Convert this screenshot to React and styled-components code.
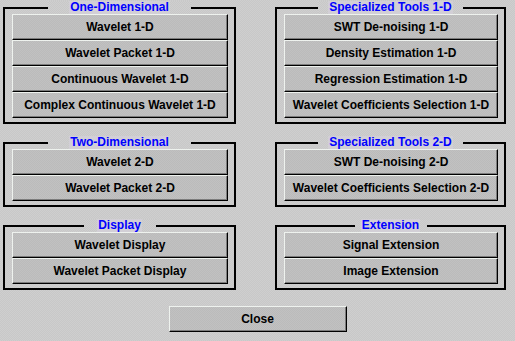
import React from 'react';
import styled, { createGlobalStyle } from 'styled-components';

const GlobalStyle = createGlobalStyle`
  html, body {
    margin: 0;
    padding: 0;
  }
  body {
    width: 515px;
    height: 341px;
    overflow: hidden;
    background: repeating-conic-gradient(#c8c8c8 0 25%, #cfcfcf 0 50%) 0 0 / 2px 2px;
    font-family: "Liberation Sans", Arial, sans-serif;
  }
`;

const Window = styled.div`
  width: 515px;
  height: 341px;
  box-sizing: border-box;
  padding-top: 7px;
  display: flex;
  flex-direction: column;
`;

const Grid = styled.div`
  display: grid;
  grid-template-columns: 233px 231px;
  column-gap: 39px;
  row-gap: 18px;
  margin-left: 3px;
`;

const Frame = styled.div`
  position: relative;
  border: 2px solid #000;
  padding: 5px 6px 4px 7px;
  display: flex;
  flex-direction: column;
`;

const Label = styled.div`
  position: absolute;
  top: -8px;
  left: 50%;
  width: ${(p) => p.$w}px;
  margin-left: ${(p) => -p.$w / 2}px;
  height: 13px;
  display: flex;
  justify-content: center;
  background: repeating-conic-gradient(#c8c8c8 0 25%, #cfcfcf 0 50%) 0 0 / 2px 2px;
`;

const LabelText = styled.span`
  color: #0000ff;
  font-weight: bold;
  font-size: 12px;
  line-height: 13px;
  background: #d2cfd6;
  padding: 0 1px;
`;

const Button = styled.button`
  box-sizing: border-box;
  height: 26px;
  width: ${(p) => (p.$w ? `${p.$w}px` : '100%')};
  margin: 0;
  padding: 0;
  border-style: solid;
  border-width: 1px;
  border-color: #eef2ee #000 #000 #eef2ee;
  box-shadow: inset -1px -1px 0 #7c7c7c;
  background: repeating-conic-gradient(#bbbbbb 0 25%, #c1c1c1 0 50%) 0 0 / 2px 2px;
  color: #000;
  font-family: "Liberation Sans", Arial, sans-serif;
  font-weight: bold;
  font-size: 12px;
  cursor: pointer;
`;

const Footer = styled.div`
  display: flex;
  justify-content: center;
  margin-top: 16px;
`;

const groups = [
  { title: 'One-Dimensional', w: 143, items: ['Wavelet 1-D', 'Wavelet Packet 1-D', 'Continuous Wavelet 1-D', 'Complex Continuous Wavelet 1-D'] },
  { title: 'Specialized Tools 1-D', w: 145, items: ['SWT De-noising 1-D', 'Density Estimation 1-D', 'Regression Estimation 1-D', 'Wavelet Coefficients Selection 1-D'] },
  { title: 'Two-Dimensional', w: 143, items: ['Wavelet 2-D', 'Wavelet Packet 2-D'] },
  { title: 'Specialized Tools 2-D', w: 145, items: ['SWT De-noising 2-D', 'Wavelet Coefficients Selection 2-D'] },
  { title: 'Display', w: 72, items: ['Wavelet Display', 'Wavelet Packet Display'] },
  { title: 'Extension', w: 72, items: ['Signal Extension', 'Image Extension'] },
];

const Group = ({ title, w, items }) => (
  <Frame>
    <Label $w={w}>
      <LabelText>{title}</LabelText>
    </Label>
    {items.map((it) => (
      <Button key={it}>{it}</Button>
    ))}
  </Frame>
);

export default function App() {
  return (
    <Window>
      <GlobalStyle />
      <Grid>
        {groups.map((g) => (
          <Group key={g.title} {...g} />
        ))}
      </Grid>
      <Footer>
        <Button $w={178}>Close</Button>
      </Footer>
    </Window>
  );
}
